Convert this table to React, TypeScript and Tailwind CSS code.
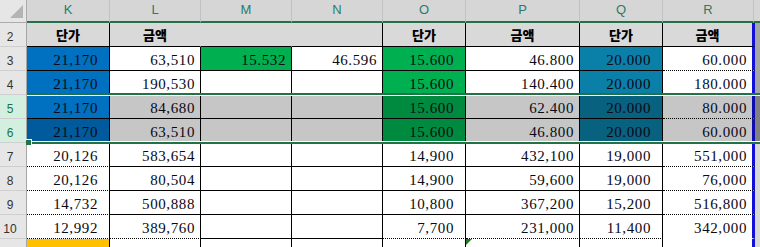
import React from 'react';

type Border = 's' | 'd' | 'n';
type Cell = [ string, string, Border ];

const BLUE = 'bg-[#0070C0]';
const BLUE_D = 'bg-[#005A9B]';
const GREEN = 'bg-[#00B050]';
const GREEN_D = 'bg-[#008A3F]';
const TEAL = 'bg-[#0A7FA8]';
const TEAL_D = 'bg-[#07617F]';
const SEL = 'bg-[#C6C6C6]';
const YELLOW = 'bg-[#FFC000]';

const COLS = [
	{ name: 'K', w: 'w-[83px]', hw: 'w-[83px]', pr: 'pr-[11px]', head: '단가' },
	{ name: 'L', w: 'w-[91px]', hw: 'w-[91px]', pr: 'pr-[5px]', head: '금액' },
	{ name: 'M', w: 'w-[91px]', hw: 'w-[91px]', pr: 'pr-[5px]', head: '' },
	{ name: 'N', w: 'w-[91px]', hw: 'w-[91px]', pr: 'pr-[5px]', head: '' },
	{ name: 'O', w: 'w-[83px]', hw: 'w-[83px]', pr: 'pr-[11px]', head: '단가' },
	{ name: 'P', w: 'w-[114px]', hw: 'w-[114px]', pr: 'pr-[5px]', head: '금액' },
	{ name: 'Q', w: 'w-[83px]', hw: 'w-[83px]', pr: 'pr-[11px]', head: '단가' },
	{ name: 'R', w: 'w-[92px]', hw: 'w-[91px]', pr: 'pr-[5px]', head: '금액' },
];

const ROWS: { n: number; sel?: boolean; strip: string; cells: Cell[] }[] = [
	{
		n: 3,
		strip: 'bg-[#A6A6A6]',
		cells: [
			[ '21,170', BLUE, 's' ],
			[ '63,510', '', 's' ],
			[ '15.532', GREEN, 's' ],
			[ '46.596', '', 's' ],
			[ '15.600', GREEN, 's' ],
			[ '46.800', '', 's' ],
			[ '20.000', TEAL, 's' ],
			[ '60.000', '', 'd' ],
		],
	},
	{
		n: 4,
		strip: 'bg-[#A6A6A6]',
		cells: [
			[ '21,170', BLUE, 's' ],
			[ '190,530', '', 's' ],
			[ '', '', 's' ],
			[ '', '', 's' ],
			[ '15.600', GREEN, 's' ],
			[ '140.400', '', 's' ],
			[ '20.000', TEAL, 's' ],
			[ '180.000', '', 's' ],
		],
	},
	{
		n: 5,
		sel: true,
		strip: 'bg-[#808080]',
		cells: [
			[ '21,170', BLUE, 's' ],
			[ '84,680', SEL, 's' ],
			[ '', SEL, 's' ],
			[ '', SEL, 's' ],
			[ '15.600', GREEN_D, 's' ],
			[ '62.400', SEL, 's' ],
			[ '20.000', TEAL_D, 's' ],
			[ '80.000', SEL, 'd' ],
		],
	},
	{
		n: 6,
		sel: true,
		strip: 'bg-[#808080]',
		cells: [
			[ '21,170', BLUE_D, 's' ],
			[ '63,510', SEL, 's' ],
			[ '', SEL, 's' ],
			[ '', SEL, 's' ],
			[ '15.600', GREEN_D, 's' ],
			[ '46.800', SEL, 's' ],
			[ '20.000', TEAL_D, 's' ],
			[ '60.000', SEL, 's' ],
		],
	},
	{
		n: 7,
		strip: 'bg-[#D9D9D9]',
		cells: [
			[ '20,126', '', 'd' ],
			[ '583,654', '', 's' ],
			[ '', '', 's' ],
			[ '', '', 's' ],
			[ '14,900', '', 's' ],
			[ '432,100', '', 's' ],
			[ '19,000', '', 's' ],
			[ '551,000', '', 'd' ],
		],
	},
	{
		n: 8,
		strip: 'bg-[#D9D9D9]',
		cells: [
			[ '20,126', '', 'd' ],
			[ '80,504', '', 's' ],
			[ '', '', 's' ],
			[ '', '', 's' ],
			[ '14,900', '', 's' ],
			[ '59,600', '', 's' ],
			[ '19,000', '', 's' ],
			[ '76,000', '', 'd' ],
		],
	},
	{
		n: 9,
		strip: 'bg-[#D9D9D9]',
		cells: [
			[ '14,732', '', 'd' ],
			[ '500,888', '', 's' ],
			[ '', '', 's' ],
			[ '', '', 's' ],
			[ '10,800', '', 's' ],
			[ '367,200', '', 's' ],
			[ '15,200', '', 's' ],
			[ '516,800', '', 'd' ],
		],
	},
	{
		n: 10,
		strip: 'bg-[#D9D9D9]',
		cells: [
			[ '12,992', '', 'd' ],
			[ '389,760', '', 'd' ],
			[ '', '', 's' ],
			[ '', '', 's' ],
			[ '7,700', '', 'd' ],
			[ '231,000', '', 'd' ],
			[ '11,400', '', 'd' ],
			[ '342,000', '', 'n' ],
		],
	},
	{
		n: 11,
		strip: 'bg-[#D9D9D9]',
		cells: [
			[ '16,800', YELLOW, 's' ],
			[ '', '', 's' ],
			[ '', '', 's' ],
			[ '', '', 's' ],
			[ '', '', 's' ],
			[ '', '', 's' ],
			[ '', '', 's' ],
			[ '', '', 's' ],
		],
	},
];

const bottomClass = ( b: Border ) => {
	if ( b === 'd' ) {
		return 'border-b-black [border-bottom-style:dotted]';
	}
	if ( b === 'n' ) {
		return 'border-b-transparent';
	}
	return 'border-b-black';
};

function RowHeader( { n, sel }: { n: number; sel?: boolean } ) {
	return (
		<div
			className={ `w-[27px] h-[24px] shrink-0 flex items-end justify-center pr-[6px] pb-[3px] border-r border-b border-r-[#A6A6A6] border-b-[#CFCFCF] text-[12px] leading-[12px] font-['Liberation_Sans',Arial,sans-serif] ${
				sel ? 'bg-[#D3EFDF] text-[#217346]' : 'bg-[#E6E6E6] text-[#333333]'
			}` }
		>
			{ n }
		</div>
	);
}

export default function App() {
	return (
		<div className="relative w-[760px] h-[247px] overflow-hidden bg-white font-['Liberation_Serif',serif] text-[#0a0a14]">
			{ /* column headers */ }
			<div className="flex h-[23px]">
				<div className="w-[27px] h-[23px] shrink-0 bg-[#E6E6E6] border-r border-b border-[#ABABAB] relative">
					<div className="absolute left-[10px] top-[5px] w-0 h-0 border-l-[13px] border-l-transparent border-b-[13px] border-b-[#B4B4B4]" />
				</div>
				{ COLS.map( ( c ) => (
					<div
						key={ c.name }
						className={ `${ c.hw } h-[23px] shrink-0 flex items-center justify-center pb-[2px] bg-[#D6D6D6] border-r border-r-[#C2C2C2] border-b-2 border-b-[#217346] text-[13px] text-[#2A7B6A] font-['Liberation_Sans',Arial,sans-serif]` }
					>
						{ c.name }
					</div>
				) ) }
				<div className="flex-1 h-[23px] bg-[#D6D6D6] border-b-2 border-b-[#217346]" />
			</div>

			{ /* row 2: headings */ }
			<div className="flex">
				<RowHeader n={ 2 } />
				{ COLS.map( ( c, i ) => {
					const noRight = i === 1 || i === 2;
					const right =
						i === 7
							? 'border-r-[3px] border-r-[#1010D8]'
							: noRight
							? 'border-r-transparent'
							: 'border-r-black';
					return (
						<div
							key={ c.name }
							className={ `${ c.w } h-[24px] shrink-0 flex items-center justify-center pt-[1px] bg-[#D9D9D9] border-r border-b border-b-black ${ right } text-[13px] font-black text-black font-['Noto_Sans_CJK_KR',sans-serif]` }
						>
							{ c.head }
						</div>
					);
				} ) }
				<div className="flex-1 h-[24px] bg-[#A6A6A6]" />
			</div>

			{ ROWS.map( ( row ) => (
				<div key={ row.n } className="flex">
					<RowHeader n={ row.n } sel={ row.sel } />
					{ row.cells.map( ( [ v, bg, b ], i ) => {
						const c = COLS[ i ];
						const right =
							i === 7
								? row.sel
									? 'border-r-[3px] border-r-[#0C0CB0]'
									: 'border-r-[3px] border-r-[#1010D8]'
								: 'border-r-black';
						return (
							<div
								key={ c.name }
								className={ `${ c.w } ${ c.pr } relative h-[24px] shrink-0 flex items-end justify-end pb-[2px] border-r border-b ${ right } ${ bottomClass(
									b
								) } ${ bg || 'bg-white' } text-[15px] leading-[16px] tracking-[0.6px] whitespace-nowrap` }
							>
								{ v }
								{ row.n === 11 && i === 5 && (
									<span className="absolute left-0 top-0 w-0 h-0 border-t-[6px] border-t-[#1E7A1E] border-r-[6px] border-r-transparent" />
								) }
							</div>
						);
					} ) }
					<div className={ `flex-1 h-[24px] ${ row.strip }` } />
				</div>
			) ) }

			{ /* selection outline for rows 5:6 */ }
			<div className="absolute left-[27px] right-0 top-[93px] h-[2px] bg-[#217346]" />
			<div className="absolute left-[27px] right-0 top-[95px] h-px bg-white" />
			<div className="absolute left-[27px] right-0 top-[141px] h-px bg-white" />
			<div className="absolute left-[27px] right-0 top-[142px] h-[2px] bg-[#217346]" />
			<div className="absolute left-[26px] top-[139px] w-[6px] h-[6px] bg-[#217346] border-t border-r border-white" />
		</div>
	);
}
